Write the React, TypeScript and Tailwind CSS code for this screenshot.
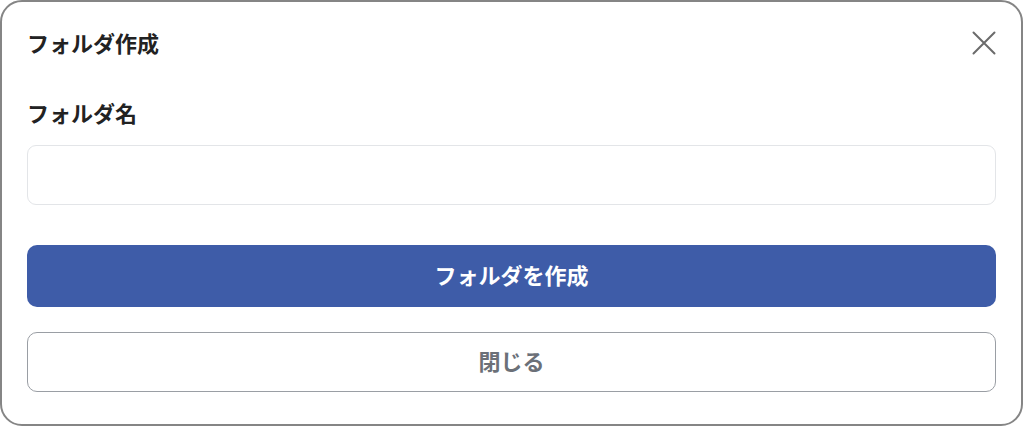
import React from "react";

export default function App() {
  return (
    <div className="w-[1024px] h-[427px] bg-white" style={{ fontFamily: '"Noto Sans CJK JP", "Noto Sans", sans-serif' }}>
      <div className="w-[1023px] h-[426px] border-2 border-[#858585] rounded-[22px] bg-white px-[25px] pt-[27px] flex flex-col">
        {/* Header */}
        <div className="flex items-center justify-between h-[28px]">
          <h2 className="text-[22px] leading-[28px] font-bold text-[#222] -mt-[3px]">フォルダ作成</h2>
          <button className="w-[24px] h-[24px] flex items-center justify-center">
            <svg width="24" height="24" viewBox="0 0 24 24" fill="none" stroke="#6b6b6b" strokeWidth="2" strokeLinecap="round">
              <path d="M1.5 1.5 L22.5 22.5 M22.5 1.5 L1.5 22.5" />
            </svg>
          </button>
        </div>

        {/* Folder name */}
        <label className="mt-[41px] text-[22px] leading-[28px] font-bold text-[#222]">フォルダ名</label>
        <input
          type="text"
          className="mt-[19px] h-[60px] w-full rounded-[9px] border border-[#e3e5e8] px-4 text-[18px] outline-none"
        />

        <button className="mt-[40px] h-[62px] w-full rounded-[10px] bg-[#3e5ca8] text-white text-[22px] font-bold pb-[4px]">
          フォルダを作成
        </button>
        <button className="mt-[25px] h-[60px] w-full rounded-[10px] border-[1.5px] border-[#9a9ea4] bg-white text-[#6b7078] text-[22px] font-bold pb-[3px]">
          閉じる
        </button>
      </div>
    </div>
  );
}
